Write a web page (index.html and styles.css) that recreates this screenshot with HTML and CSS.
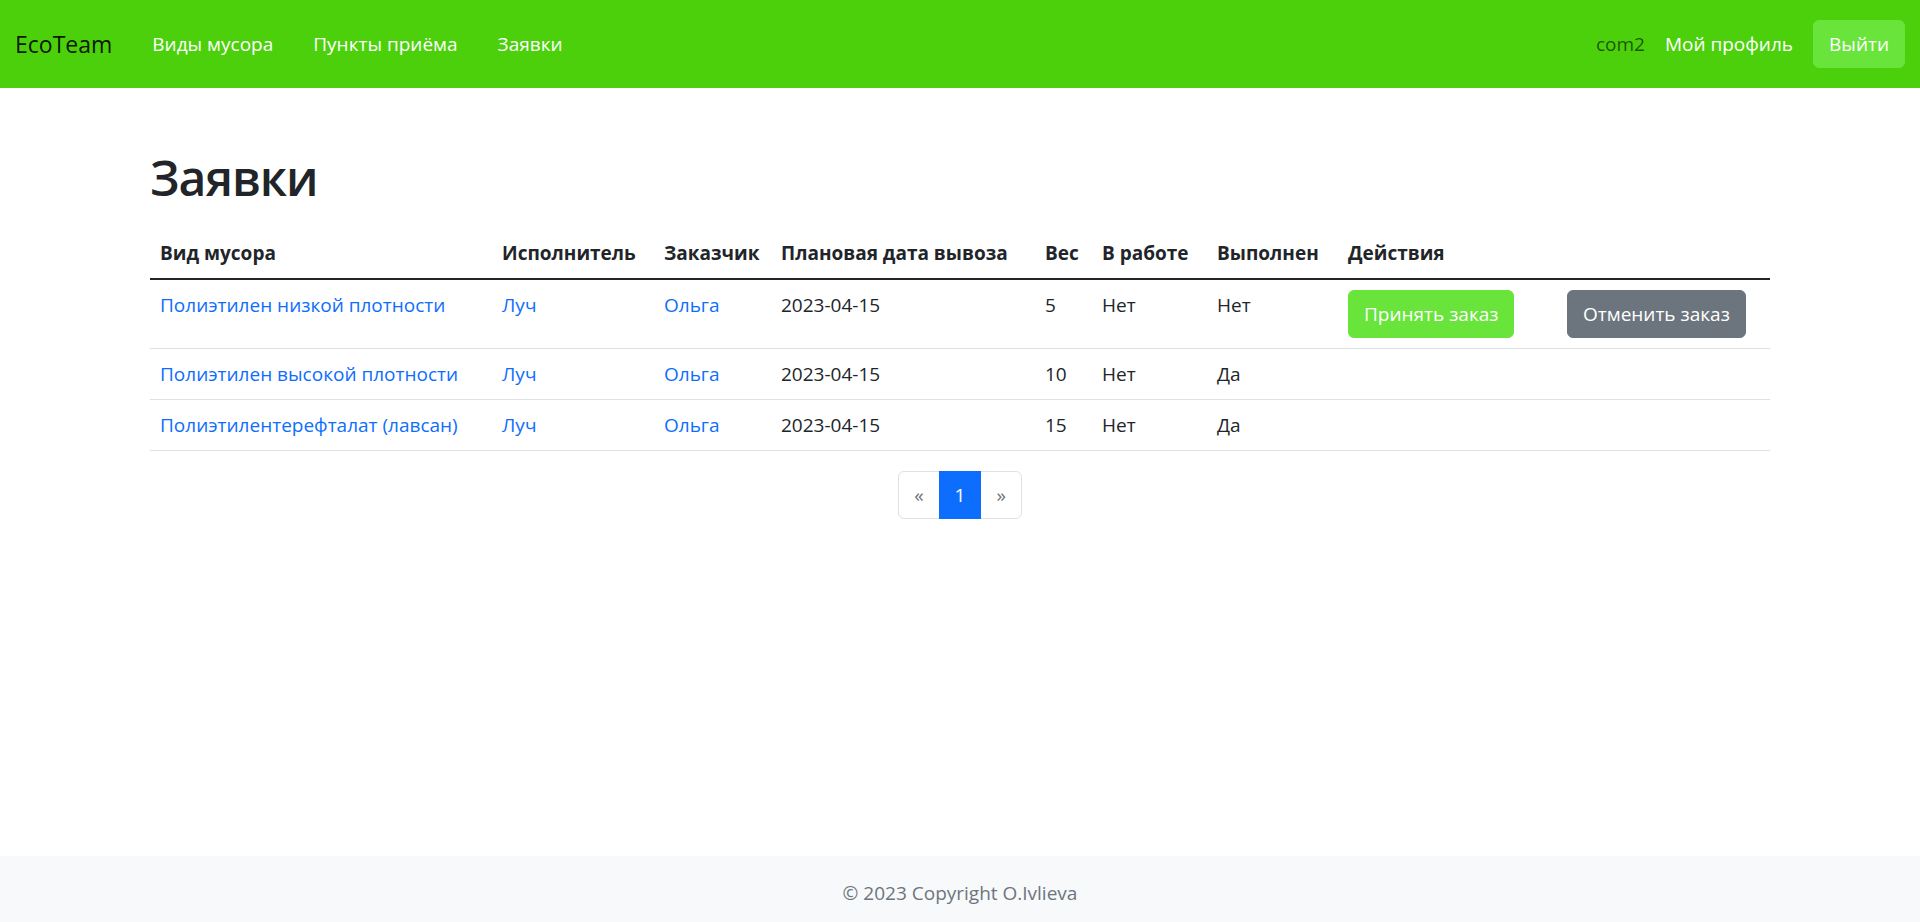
FILE: index.html
```html
<!DOCTYPE html>
<html lang="ru">
<head>
<meta charset="utf-8">
<title>Заявки</title>
<link rel="stylesheet" href="styles.css">
</head>
<body>
<header class="navbar">
  <div class="nav-left">
    <a class="brand" href="#">EcoTeam</a>
    <ul class="nav-links">
      <li><a class="nav-link" href="#">Виды мусора</a></li>
      <li><a class="nav-link" href="#">Пункты приёма</a></li>
      <li><a class="nav-link" href="#">Заявки</a></li>
    </ul>
  </div>
  <div class="nav-right">
    <span class="username">com2</span>
    <a class="nav-link profile" href="#">Мой профиль</a>
    <button class="btn btn-green" type="button">Выйти</button>
  </div>
</header>

<main class="container">
  <h1 class="page-title">Заявки</h1>
  <table class="orders">
    <colgroup>
      <col class="c-kind">
      <col class="c-exec">
      <col class="c-cust">
      <col class="c-date">
      <col class="c-weight">
      <col class="c-work">
      <col class="c-done">
      <col class="c-act">
      <col class="c-act2">
    </colgroup>
    <thead>
      <tr>
        <th>Вид мусора</th>
        <th>Исполнитель</th>
        <th>Заказчик</th>
        <th>Плановая дата вывоза</th>
        <th>Вес</th>
        <th>В работе</th>
        <th>Выполнен</th>
        <th>Действия</th>
        <th></th>
      </tr>
    </thead>
    <tbody>
      <tr>
        <td><a href="#">Полиэтилен низкой плотности</a></td>
        <td><a href="#">Луч</a></td>
        <td><a href="#">Ольга</a></td>
        <td>2023-04-15</td>
        <td>5</td>
        <td>Нет</td>
        <td>Нет</td>
        <td><button class="btn btn-green" type="button">Принять заказ</button></td>
        <td><button class="btn btn-gray" type="button">Отменить заказ</button></td>
      </tr>
      <tr>
        <td><a href="#">Полиэтилен высокой плотности</a></td>
        <td><a href="#">Луч</a></td>
        <td><a href="#">Ольга</a></td>
        <td>2023-04-15</td>
        <td>10</td>
        <td>Нет</td>
        <td>Да</td>
        <td></td>
        <td></td>
      </tr>
      <tr>
        <td><a href="#">Полиэтилентерефталат (лавсан)</a></td>
        <td><a href="#">Луч</a></td>
        <td><a href="#">Ольга</a></td>
        <td>2023-04-15</td>
        <td>15</td>
        <td>Нет</td>
        <td>Да</td>
        <td></td>
        <td></td>
      </tr>
    </tbody>
  </table>
  <nav class="pager">
    <ul class="pagination">
      <li class="page disabled"><span class="page-link">«</span></li>
      <li class="page active"><span class="page-link">1</span></li>
      <li class="page disabled"><span class="page-link">»</span></li>
    </ul>
  </nav>
</main>

<footer class="footer">
  <span>© 2023 Copyright O.Ivlieva</span>
</footer>
</body>
</html>
```
FILE: styles.css
```css
* { box-sizing: border-box; }

html, body { height: 100%; }

body {
  margin: 0;
  min-height: 922px;
  height: 922px;
  overflow: hidden;
  display: flex;
  flex-direction: column;
  font-family: "Segoe UI", "Open Sans", "Noto Sans", sans-serif;
  font-size: 19px;
  line-height: 30px;
  color: #212529;
  background: #fff;
}

a { text-decoration: none; }

/* ---------- navbar ---------- */
.navbar {
  display: flex;
  align-items: center;
  justify-content: space-between;
  padding: 20px 15px;
  background: #4bd00b;
  height: 88px;
}

.nav-left,
.nav-right {
  display: flex;
  align-items: center;
}

.brand {
  font-size: 23px;
  line-height: 37px;
  color: rgba(0, 0, 0, 0.9);
  margin-right: 20px;
}

.nav-links {
  display: flex;
  list-style: none;
  margin: 0;
  padding: 0;
}

.nav-link {
  display: block;
  padding: 8px 20px;
  color: #fff;
}

.nav-right { gap: 20px; }

.username { color: rgba(0, 0, 0, 0.6); }

.nav-right .profile { padding: 8px 0; }

/* ---------- buttons ---------- */
.btn {
  font: inherit;
  line-height: 30px;
  padding: 8px 15px;
  border: 1px solid transparent;
  border-radius: 6px;
  color: #fff;
  cursor: pointer;
  white-space: nowrap;
}

.btn-green { background: #68e43a; border-color: #68e43a; }
.btn-gray { background: #6c757d; border-color: #6c757d; }

/* ---------- content ---------- */
.container {
  flex: 1;
  width: 100%;
  max-width: 1650px;
  margin: 60px auto 0;
  padding: 0 15px;
}

.page-title {
  margin: 0 0 20px;
  font-size: 48px;
  line-height: 60px;
  font-weight: 600;
  letter-spacing: -1px;
}

.orders {
  width: 100%;
  border-collapse: collapse;
  table-layout: fixed;
  margin-bottom: 20px;
}

.c-kind { width: 342px; }
.c-exec { width: 162px; }
.c-cust { width: 117px; }
.c-date { width: 264px; }
.c-weight { width: 57px; }
.c-work { width: 115px; }
.c-done { width: 131px; }
.c-act { width: 219px; }
.c-act2 { width: 213px; }

.orders th,
.orders td {
  padding: 10px;
  text-align: left;
  vertical-align: top;
  white-space: nowrap;
  border-bottom: 1px solid #dee2e6;
}

.orders th {
  font-weight: 700;
  border-bottom: 2px solid #212529;
}

.orders td a { color: #0d6efd; }

/* ---------- pagination ---------- */
.pager {
  display: flex;
  justify-content: center;
}

.pagination {
  display: flex;
  list-style: none;
  margin: 0;
  padding: 0;
}

.page-link {
  display: block;
  padding: 8px 15px;
  line-height: 30px;
  border: 1px solid #dee2e6;
  margin-left: -1px;
  color: #6c757d;
  background: #fff;
}

.page:first-child .page-link {
  margin-left: 0;
  border-radius: 6px 0 0 6px;
}

.page:last-child .page-link { border-radius: 0 6px 6px 0; }

.page.active .page-link {
  background: #0d6efd;
  border-color: #0d6efd;
  color: #fff;
  position: relative;
}

/* ---------- footer ---------- */
.footer {
  height: 66px;
  padding-top: 22px;
  background: #f8f9fa;
  text-align: center;
  color: #6c757d;
}
```
